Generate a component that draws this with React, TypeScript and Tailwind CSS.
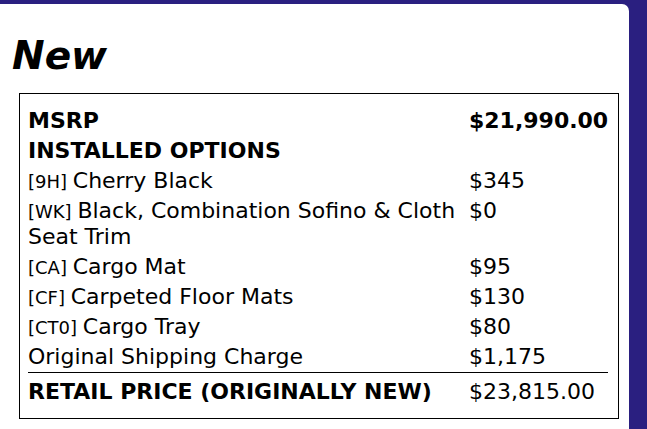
const items: { code?: string; label: string; price: string }[] = [
  { code: "[9H]", label: "Cherry Black", price: "$345" },
  { code: "[WK]", label: "Black, Combination Sofino & Cloth Seat Trim", price: "$0" },
  { code: "[CA]", label: "Cargo Mat", price: "$95" },
  { code: "[CF]", label: "Carpeted Floor Mats", price: "$130" },
  { code: "[CT0]", label: "Cargo Tray", price: "$80" },
  { label: "Original Shipping Charge", price: "$1,175" },
];

export default function App() {
  return (
    <div className="h-[429px] w-[647px] overflow-hidden bg-[#2a1f80] pt-[4px] font-['DejaVu_Sans',sans-serif] text-black">
      <div className="h-[440px] w-[629px] rounded-tr-[7px] bg-white pl-[12px] pt-[30px]">
        <h1 className="text-[39px] font-bold italic leading-[44px]">New</h1>

        <div className="ml-[7px] mt-[15px] w-[600px] border border-black pb-[11px] pl-[8px] pr-[11px] pt-[12px]">
          <div className="grid grid-cols-[441px_1fr] text-[22px] leading-[26px]">
            <div className="h-[30px] py-[2px] font-bold">MSRP</div>
            <div className="h-[30px] py-[2px] font-bold">$21,990.00</div>

            <div className="h-[30px] py-[2px] font-bold">INSTALLED OPTIONS</div>
            <div className="h-[30px] py-[2px]"></div>

            {items.map((it, i) => (
              <div key={i} className="contents">
                <div className="py-[2px] pr-[4px]">
                  {it.code && <span className="text-[18px] leading-none">{it.code} </span>}
                  {it.label}
                </div>
                <div className="py-[2px]">{it.price}</div>
              </div>
            ))}

            <div className="border-t border-black pb-[2px] pt-[6px] font-bold">RETAIL PRICE (ORIGINALLY NEW)</div>
            <div className="border-t border-black pb-[2px] pt-[6px]">$23,815.00</div>
          </div>
        </div>
      </div>
    </div>
  );
}
